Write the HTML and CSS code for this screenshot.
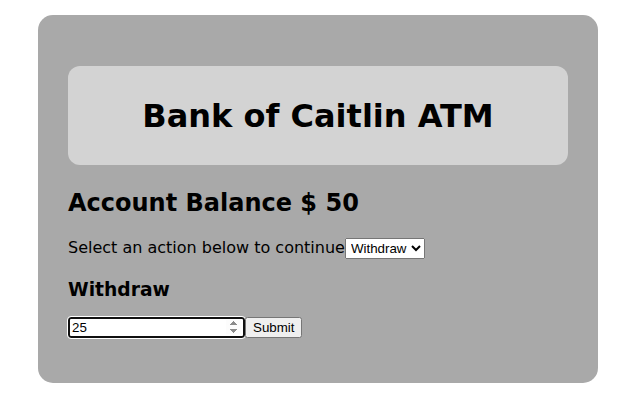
FILE: index.html
```html
<!DOCTYPE html>
<html>
<head>
<meta charset="utf-8">
<link rel="stylesheet" href="styles.css">
</head>
<body>
<div class="atm">
  <div class="header">
    <h1>Bank of Caitlin ATM</h1>
  </div>
  <h2>Account Balance $ 50</h2>
  <p class="prompt">Select an action below to continue<select class="action"><option>Withdraw</option><option>Deposit</option></select></p>
  <h3>Withdraw</h3>
  <form class="form"><input class="amount" type="number" value="25" autofocus><button class="submit" type="button">Submit</button></form>
</div>
</body>
</html>
```
FILE: styles.css
```css
html, body {
  margin: 0;
  padding: 0;
  background: #ffffff;
}
body {
  padding: 15px 0 0 38px;
  font-family: "DejaVu Sans", Verdana, sans-serif;
  font-size: 16px;
  color: #000;
}
.atm {
  width: 500px;
  padding: 51px 30px 45px;
  background: #a9a9a9;
  border-radius: 15px;
}
.header {
  background: #d3d3d3;
  border-radius: 12px;
  padding: 30px 0;
  text-align: center;
}
.header h1 {
  margin: 0;
  font-size: 32px;
  line-height: 38px;
  padding-top: 1px;
}
h2 {
  font-size: 24px;
  margin: 24px 0 20px;
}
.prompt {
  margin: 0;
  padding-top: 1px;
}
.action {
  font-family: "Liberation Sans", Arial, sans-serif;
  font-size: 13.33px;
  vertical-align: middle;
  padding: 1px 1px;
}
h3 {
  font-size: 18.72px;
  margin: 20px 0 17px;
}
.form {
  display: flex;
  align-items: center;
  margin: 0;
}
.amount {
  width: 177px;
  height: 21px;
  box-sizing: border-box;
  font-family: "Liberation Sans", Arial, sans-serif;
  font-size: 13.33px;
  border: 2px solid #101010;
  border-radius: 3px;
  padding: 1px 2px;
  outline: 1px solid #fff;
}
.submit {
  font-family: "Liberation Sans", Arial, sans-serif;
  font-size: 13.33px;
  height: 21px;
  padding: 1px 6px;
  margin-left: 0;
}
```
